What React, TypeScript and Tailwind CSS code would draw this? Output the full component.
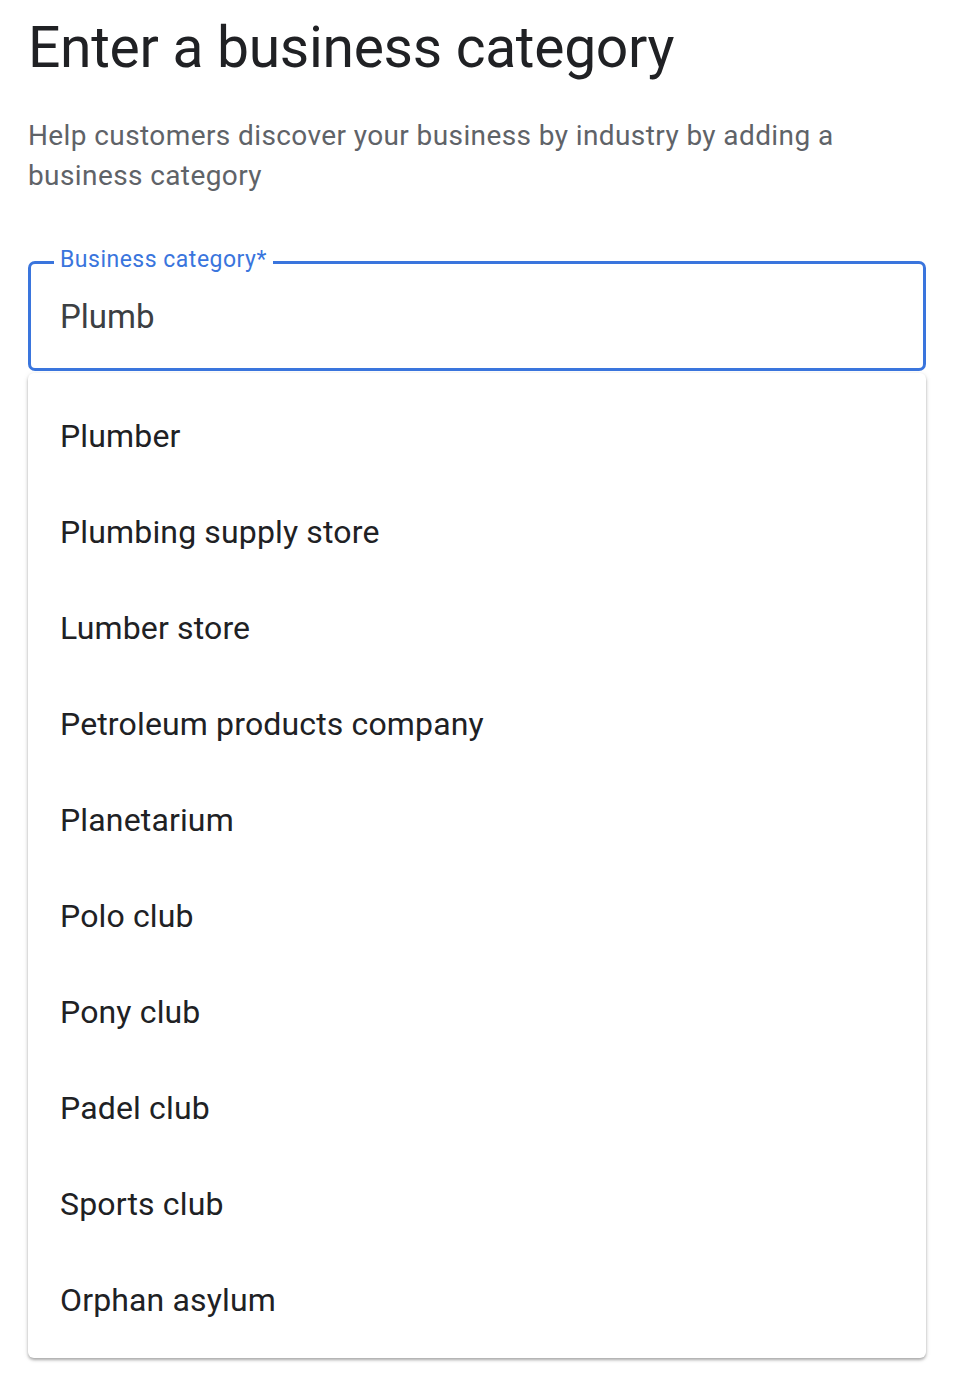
import React from "react";

const items = [
  "Plumber",
  "Plumbing supply store",
  "Lumber store",
  "Petroleum products company",
  "Planetarium",
  "Polo club",
  "Pony club",
  "Padel club",
  "Sports club",
  "Orphan asylum",
];

export default function App() {
  return (
    <div className="w-[956px] h-[1384px] bg-white pl-[28px] pr-[30px] pt-[14px]" style={{ fontFamily: "Roboto, 'Noto Sans', sans-serif" }}>
      <h1 className="text-[57px] leading-[68px] text-[#202124] font-normal tracking-[-0.3px]">Enter a business category</h1>
      <p className="mt-[34px] text-[28px] leading-[40px] text-[#5f6368] tracking-[0.4px] w-[860px]">
        Help customers discover your business by industry by adding a business category
      </p>
      <div className="relative mt-[65px] h-[110px] rounded-[7px] border-[3px] border-[#3a75dd]">
        <span className="absolute left-[23px] top-[-19px] bg-white px-[6px] text-[23px] leading-[30px] text-[#3a75dd] tracking-[0.5px]">
          Business category*
        </span>
        <div className="pl-[29px] pt-[33px] text-[33px] leading-[40px] text-[#3c4043]">Plumb</div>
      </div>
      <div className="mt-[2px] rounded-[6px] bg-white pt-[15px] pb-[10px] shadow-[0_2px_3px_rgba(0,0,0,0.3),0_1px_6px_rgba(0,0,0,0.08)]">
        {items.map((it) => (
          <div key={it} className="h-[96px] flex items-center pl-[32px] text-[32px] tracking-[0.15px] text-[#202124]">
            {it}
          </div>
        ))}
      </div>
    </div>
  );
}
